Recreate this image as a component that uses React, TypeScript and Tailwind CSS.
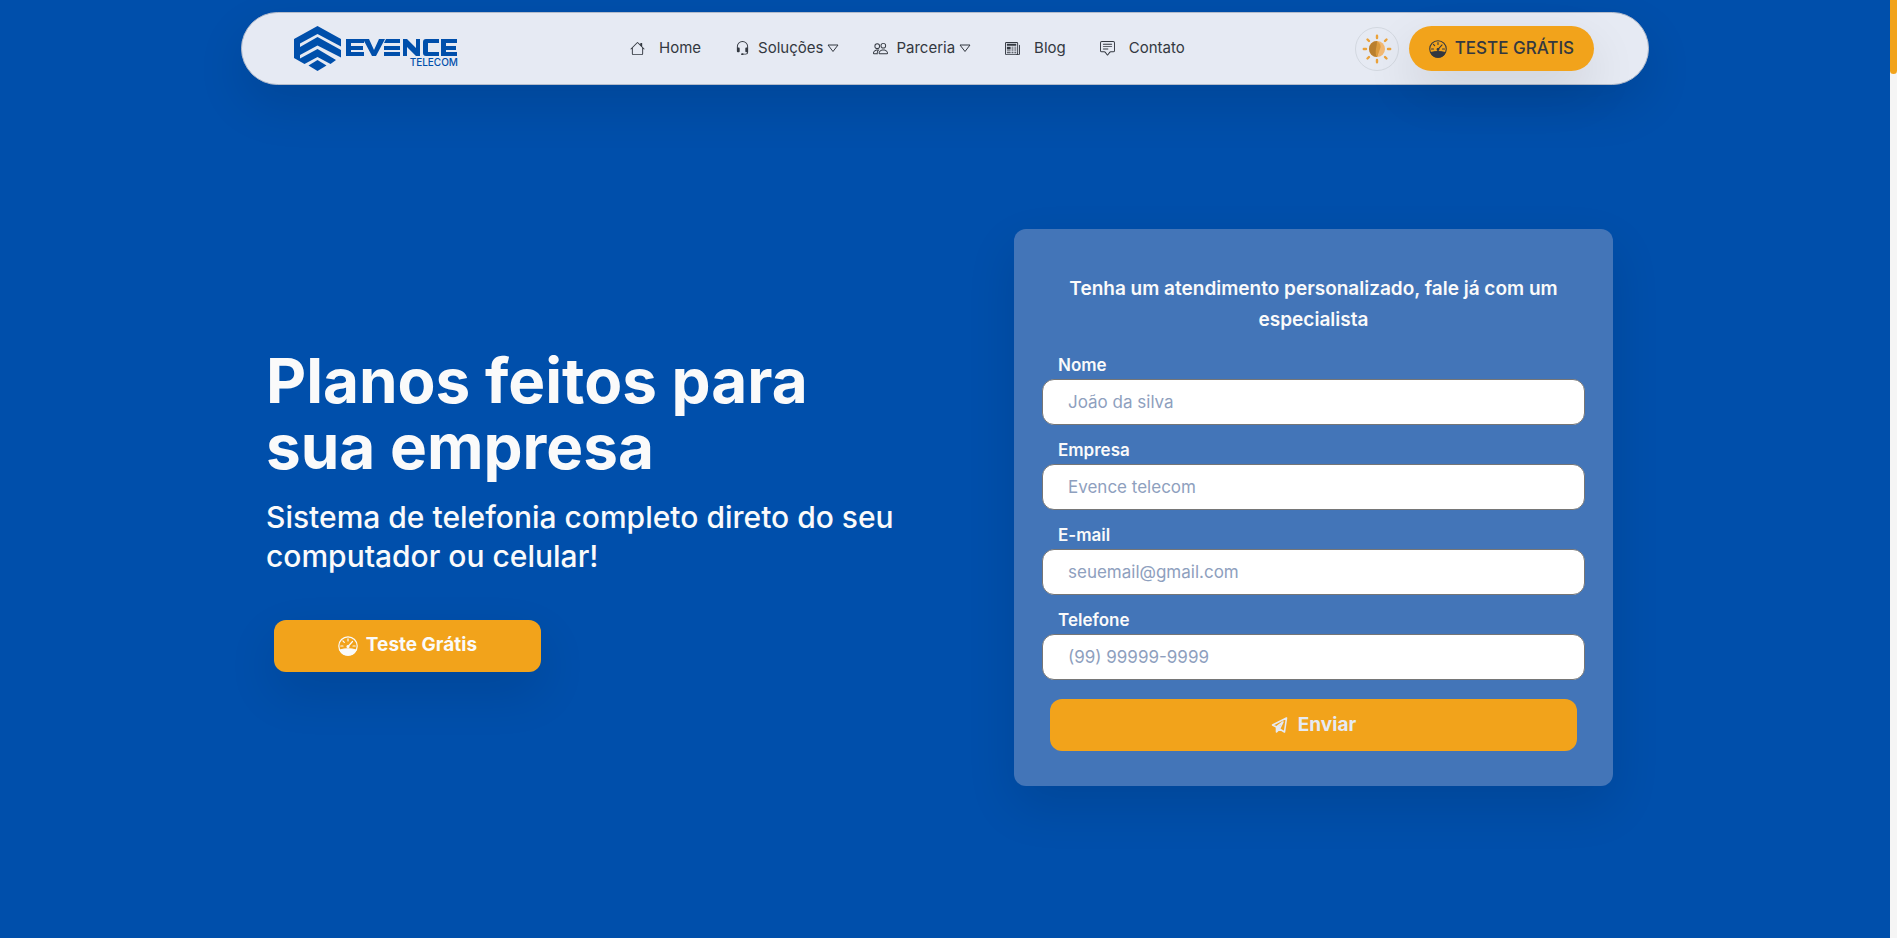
import { BsChatSquareText, BsHeadset, BsHouse, BsNewspaper, BsPeople } from "react-icons/bs";
import type { ReactNode } from "react";

function Logo() {
  return (
    <a href="#" aria-label="Evence Telecom" className="block">
      <svg width="166" height="46" viewBox="0 0 166 46" fill="#004fab" aria-hidden="true">
        <path d="M23.500 0L47 13V20.500L23.500 8L6 17.500V21L23.500 11L47 24V31.500L23.500 19.500L6 29V32.500L23.500 23L42 34L36.500 38L23.500 31L10.500 38L0 32V13Z" />
        <path d="M23.500 34L32.500 39.500L23.500 45L14.500 39.500Z" />
        <path d="M52 13H70V17H57V20H69V24H57V26H70V30H52Z" />
        <path d="M69 13H75L80 24L85 13H91L82 30H78Z" />
        <path d="M92 13H106V17H90ZM90 20H106V24H90ZM90 26H106V30H90Z" />
        <path d="M109 13H113L122 22V13H126V30H122L113 21V30H109Z" />
        <path d="M132 13H145V17H134V26H145V30H132Q129 30 129 27V16Q129 13 132 13Z" />
        <path d="M147 13H163V17H152V20H162V24H152V26H163V30H147Z" />
        <text x="164" y="40" textAnchor="end" fontFamily="Inter, sans-serif" fontSize="10" fontWeight="500">TELECOM</text>
      </svg>
    </a>
  );
}

function Gauge({ className }: { className: string }) {
  return (
    <svg viewBox="0 0 20 20" fill="none" stroke="currentColor" strokeWidth="1.2" strokeLinecap="round" className={className} aria-hidden="true">
      <circle cx="10" cy="10" r="9.200" />
      <path d="M10 2.800V5M4.900 4.900L6.300 6.300M2.800 10H5M15 10H17.200M10 10.500L14.500 5.500" />
      <circle cx="10" cy="10.500" r="1" fill="currentColor" />
      <path d="M2 14Q10 11.500 18 14Q15.500 19.200 10 19.200Q4.500 19.200 2 14Z" fill="currentColor" />
    </svg>
  );
}

function Plane() {
  return (
    <svg width="17" height="17" viewBox="0 0 17 17" fill="none" stroke="currentColor" strokeWidth="1.6" strokeLinejoin="round" strokeLinecap="round" aria-hidden="true">
      <path d="M15.500 1L1.500 8L5.500 10V15L8.500 12L13.500 15Z" />
      <path d="M5.500 10L12 5L8.500 12" />
      <path d="M5.500 10L9.500 8L8.500 12L5.500 15Z" fill="currentColor" stroke="none" />
    </svg>
  );
}

function Caret() {
  return (
    <svg width="12" height="9" viewBox="0 0 12 9" fill="none" stroke="currentColor" strokeLinejoin="round" aria-hidden="true">
      <path d="M1 1H11L6 7.500Z" />
    </svg>
  );
}

function Sun() {
  return (
    <svg width="30" height="30" viewBox="0 0 30 30" aria-hidden="true">
      <circle cx="15" cy="15" r="8" fill="#f2b873" />
      <path d="M15 7A8 8 0 0 0 15 23Q17 19 16 15T15 7Z" fill="#b97f2e" />
      <path d="M15 7Q20 10 18 15T15 23Q13 20 14 15T15 7Z" fill="#dd9c3e" />
      <g stroke="#eba23a" strokeWidth="2.400" strokeLinecap="round">
        <path d="M15 1.800V4M15 26V28.200M1.800 15H4M26 15H28.200M5.500 5.500L7 7M24.500 5.500L23 7M5.500 24.500L7 23M24.500 24.500L23 23" />
      </g>
    </svg>
  );
}

function NavItem({ icon, label, menu }: { icon: ReactNode; label: string; menu?: boolean }) {
  return (
    <li>
      <a href="#" className={menu ? "flex items-center gap-2" : "flex items-center gap-3.5"}>
        {icon}
        <span className="flex items-center gap-1">
          {label}
          {menu && <Caret />}
        </span>
      </a>
    </li>
  );
}

const fields = [
  { id: "nome", label: "Nome", placeholder: "João da silva", type: "text" },
  { id: "empresa", label: "Empresa", placeholder: "Evence telecom", type: "text" },
  { id: "email", label: "E-mail", placeholder: "seuemail@gmail.com", type: "email" },
  { id: "telefone", label: "Telefone", placeholder: "(99) 99999-9999", type: "tel" },
];

export default function App() {
  return (
    <div className="flex min-h-screen bg-[#004fab] font-['Inter',sans-serif] text-[#fafafa]">
      <div className="flex min-w-0 flex-1 flex-col items-center pt-3">
        <header className="flex h-[73px] w-full max-w-[1408px] items-center justify-between rounded-full border border-[#b4bccb] bg-[#e6eaf3] pr-[54px] pl-[52px] text-[#333840] shadow-[0_20px_50px_rgb(0_0_0/0.11)]">
          <Logo />
          <nav>
            <ul className="flex items-center gap-[34px] text-[15px]">
              <NavItem icon={<BsHouse />} label="Home" />
              <NavItem icon={<BsHeadset />} label="Soluções" menu />
              <NavItem icon={<BsPeople />} label="Parceria" menu />
              <NavItem icon={<BsNewspaper />} label="Blog" />
              <NavItem icon={<BsChatSquareText />} label="Contato" />
            </ul>
          </nav>
          <div className="flex items-center gap-2.5">
            <button type="button" aria-label="Alternar tema" className="flex size-11 items-center justify-center rounded-full border border-[#d3d8e0]">
              <Sun />
            </button>
            <a href="#" className="flex h-[45px] items-center gap-2 rounded-full bg-[#f2a31b] px-5 text-[17px] font-medium shadow-[0_20px_50px_rgb(0_0_0/0.11)]">
              <Gauge className="size-[18px]" />
              TESTE GRÁTIS
            </a>
          </div>
        </header>

        <main className="mt-36 grid w-full max-w-[1408px] grid-cols-[1fr_599px] items-center gap-24 pr-9 pl-[25px]">
          <section className="pt-1">
            <h1 className="text-[62px] leading-[66px] font-bold">Planos feitos para sua empresa</h1>
            <p className="mt-[18px] text-[30px] leading-[39px] font-medium">Sistema de telefonia completo direto do seu computador ou celular!</p>
            <a href="#" className="mt-11 ml-2 flex h-[52px] w-[267px] items-center justify-center gap-2 rounded-xl bg-[#f2a31b] text-[19px] font-bold shadow-[0_20px_50px_rgb(0_0_0/0.11)]">
              <Gauge className="size-5" />
              Teste Grátis
            </a>
          </section>

          <form className="rounded-xl bg-[#4375b8] px-7 pt-11 pb-[35px] shadow-[0_20px_50px_rgb(0_0_0/0.11)]">
            <h2 className="px-6 text-center text-[19px] leading-[31px] font-semibold">Tenha um atendimento personalizado, fale já com um especialista</h2>
            <div className="mt-[18px] flex flex-col gap-[13px]">
              {fields.map((f) => (
                <div key={f.id} className="flex flex-col gap-[2px]">
                  <label htmlFor={f.id} className="ml-4 text-[17px] leading-6 font-semibold">{f.label}</label>
                  <input id={f.id} type={f.type} placeholder={f.placeholder} className="h-[46px] rounded-xl border border-[#767676] bg-white px-[25px] text-[17px] text-gray-800 placeholder:text-[#8ea0be]" />
                </div>
              ))}
            </div>
            <button type="submit" className="mx-2 mt-[19px] flex h-[52px] w-[calc(100%-16px)] items-center justify-center gap-2.5 rounded-xl bg-[#f2a31b] text-[19px] font-bold text-[#e6eaf3]">
              <Plane />
              Enviar
            </button>
          </form>
        </main>
      </div>
      <div className="w-[7px] bg-[#f5f5f5]">
        <div className="h-[74px] rounded-b bg-[#f2a31b]" />
      </div>
    </div>
  );
}
